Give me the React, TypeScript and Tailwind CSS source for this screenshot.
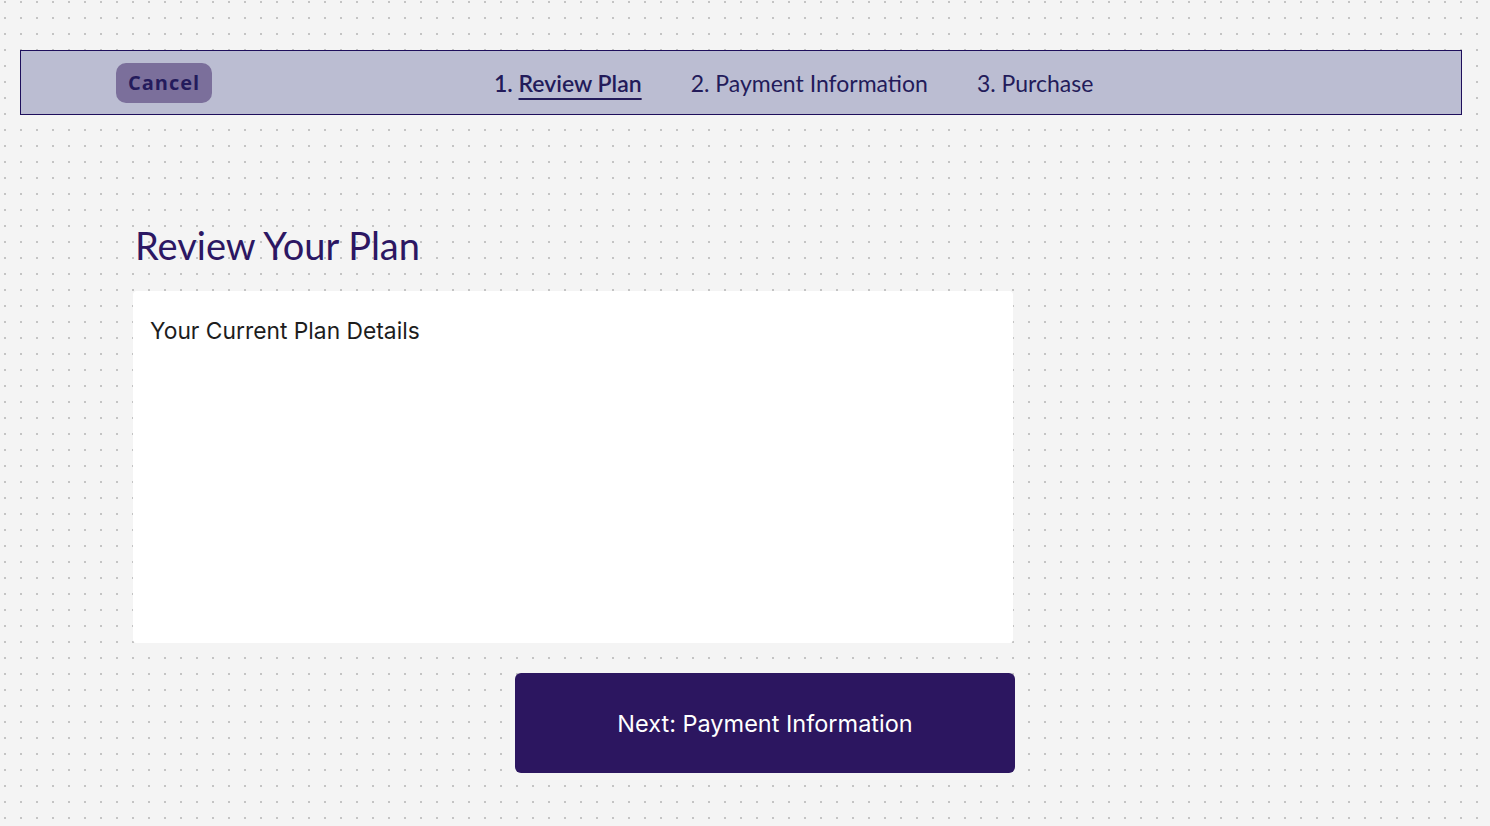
import React from 'react';

const steps = [
  { n: '1.', label: 'Review Plan', active: true },
  { n: '2.', label: 'Payment Information', active: false },
  { n: '3.', label: 'Purchase', active: false },
];

export default function App() {
  return (
    <div className="min-h-screen w-full bg-[#f4f4f4] bg-[radial-gradient(circle,#c4c4c4_1px,transparent_1.3px)] bg-[length:16px_16px] bg-[position:-3px_-6px] pt-[50px] pl-5">
      {/* Top step bar */}
      <header className="flex h-[65px] w-[1442px] items-center border border-[#1e0f5c] bg-[#bbbdd2]">
        <button className="ml-[95px] flex h-10 w-24 items-center justify-center rounded-[10px] bg-[#7b6f9b] font-['Open_Sans',sans-serif] text-[20px] font-bold tracking-[0.05em] text-[#241b5c]">
          Cancel
        </button>
        <nav className="ml-[282px] mt-[2px] flex items-center gap-[49px] font-['Lato',sans-serif] text-[23px] text-[#231b5a]">
          {steps.map((s) => (
            <span key={s.n} className={s.active ? 'font-semibold' : ''}>
              {s.n}{' '}
              <span className={s.active ? 'underline decoration-[1.5px] underline-offset-[6px]' : ''}>{s.label}</span>
            </span>
          ))}
        </nav>
      </header>

      {/* Main */}
      <main className="ml-[113px] mt-[108px] w-[882px]">
        <h1 className="pl-[2px] font-['Lato',sans-serif] text-[38px] leading-[44px] text-[#2c1763]">Review Your Plan</h1>
        <section className="mt-[24px] h-[352px] w-[880px] rounded-[4px] bg-white px-[17px] pt-[26px]">
          <h2 className="font-['Inter',sans-serif] text-[22.8px] leading-[28px] text-[#1d1d1d]">Your Current Plan Details</h2>
        </section>
        <div className="mt-[30px] flex justify-end">
          <button className="flex h-[100px] w-[500px] items-center justify-center rounded-[6px] bg-[#2c1660] pt-[2px] font-['Inter',sans-serif] text-[23.5px] text-white">
            Next: Payment Information
          </button>
        </div>
      </main>
    </div>
  );
}
